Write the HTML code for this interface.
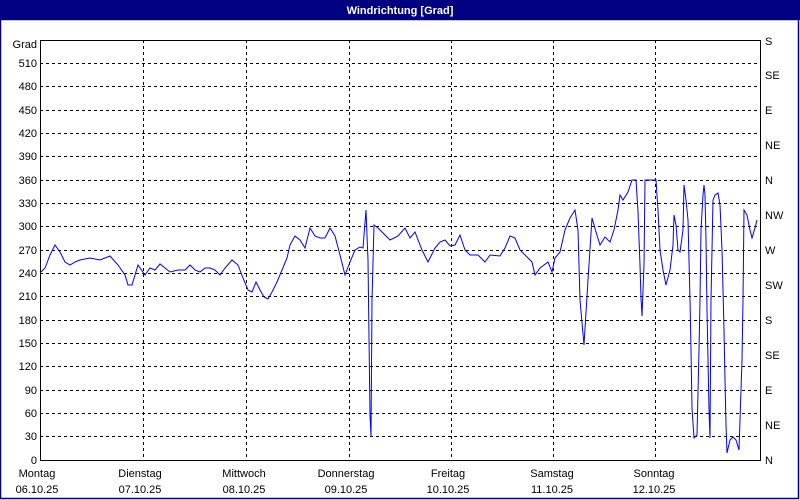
<!DOCTYPE html>
<html><head><meta charset="utf-8"><style>
html,body{margin:0;padding:0;background:#fff;}
body{width:800px;height:500px;overflow:hidden;position:relative;font-family:"Liberation Sans",sans-serif;font-size:11px;}
</style></head><body>
<svg width="800" height="500" xmlns="http://www.w3.org/2000/svg" style="position:absolute;left:0;top:0" font-family="Liberation Sans, sans-serif" font-size="11">
<rect x="0" y="0" width="800" height="500" fill="#fff"/>
<rect x="0" y="0" width="800" height="20" fill="#000080"/>
<rect x="0.5" y="19.5" width="798" height="479" fill="none" stroke="#000080" stroke-width="1.5"/>
<text x="400" y="14" fill="#fff" font-weight="bold" text-anchor="middle">Windrichtung [Grad]</text>
<g stroke="#000" stroke-width="1" stroke-dasharray="3,3" fill="none">
<path d="M40 63.5H760M40 86.5H760M40 110.5H760M40 133.5H760M40 156.5H760M40 180.5H760M40 203.5H760M40 226.5H760M40 250.5H760M40 273.5H760M40 296.5H760M40 320.5H760M40 343.5H760M40 366.5H760M40 390.5H760M40 413.5H760M40 436.5H760"/>
<path d="M143.5 40V460M246.5 40V460M349.5 40V460M451.5 40V460M553.5 40V460M655.5 40V460"/>
</g>
<path d="M40.5 40V460.5H760.5V40M40 40.5H760" stroke="#000" fill="none"/>
<g text-anchor="end" fill="#000">
<text x="37" y="48">Grad</text>
<text x="37" y="67">510</text><text x="37" y="90">480</text><text x="37" y="114">450</text>
<text x="37" y="137">420</text><text x="37" y="160">390</text><text x="37" y="184">360</text>
<text x="37" y="207">330</text><text x="37" y="230">300</text><text x="37" y="254">270</text>
<text x="37" y="277">240</text><text x="37" y="300">210</text><text x="37" y="324">180</text>
<text x="37" y="347">150</text><text x="37" y="370">120</text><text x="37" y="394">90</text>
<text x="37" y="417">60</text><text x="37" y="440">30</text><text x="37" y="464">0</text>
</g>
<g fill="#000">
<text x="765" y="45">S</text><text x="765" y="79">SE</text><text x="765" y="114">E</text>
<text x="765" y="149">NE</text><text x="765" y="184">N</text><text x="765" y="219">NW</text>
<text x="765" y="254">W</text><text x="765" y="289">SW</text><text x="765" y="324">S</text>
<text x="765" y="359">SE</text><text x="765" y="394">E</text><text x="765" y="429">NE</text>
<text x="765" y="464">N</text>
</g>
<g fill="#000" text-anchor="middle">
<text x="37" y="477">Montag</text><text x="37" y="493">06.10.25</text>
<text x="140" y="477">Dienstag</text><text x="140" y="493">07.10.25</text>
<text x="244" y="477">Mittwoch</text><text x="244" y="493">08.10.25</text>
<text x="346" y="477">Donnerstag</text><text x="346" y="493">09.10.25</text>
<text x="448" y="477">Freitag</text><text x="448" y="493">10.10.25</text>
<text x="552" y="477">Samstag</text><text x="552" y="493">11.10.25</text>
<text x="654" y="477">Sonntag</text><text x="654" y="493">12.10.25</text>
</g>
<polyline fill="none" stroke="#0000ff" stroke-width="1" points="41,272 45,268 50,255 55,245 60,252 65,262 70,265 75,262 80,260 90,258 100,260 110,256 118,265 125,275 128,285 132,285 138,265 145,275 150,268 155,270 160,264 165,268 170,272 178,270 185,270 190,265 195,270 200,272 205,268 210,268 215,270 220,275 225,268 232,260 238,265 243,278 248,290 252,292 256,282 260,290 264,297 268,299 272,292 277,282 282,270 287,258 290,245 295,236 300,240 305,248 310,228 315,236 320,238 325,238 330,228 335,236 340,255 345,275 350,262 355,250 360,247 363,248 366,210 368,260 370,415 371,436 372,300 374,225 378,228 385,235 390,240 398,236 405,228 410,238 415,232 422,250 428,262 435,248 440,242 445,240 450,246 455,245 460,235 465,250 470,255 478,255 485,262 490,255 500,256 505,248 510,236 515,238 520,250 525,255 532,262 535,275 540,268 548,262 552,272 555,258 560,252 565,230 570,218 575,210 578,230 580,300 584,345 588,280 592,218 596,232 600,245 605,237 610,242 614,230 618,210 620,195 623,200 628,192 632,180 636,180 638,212 640,265 641,298 642,316 644,265 645,180 656,180 658,210 660,250 663,270 666,285 670,270 673,245 674,215 676,225 678,250 680,252 683,230 684,185 686,200 688,220 690,300 691,350 692,408 694,438 697,435 699,350 700,300 701,230 703,195 704,185 705,195 706,240 707,310 708,360 709,410 710,438 711,300 713,200 715,195 718,193 720,205 722,250 724,330 725,380 726,425 727,453 730,440 733,437 736,440 739,450 740,420 742,360 743,300 744,210 747,215 750,230 752,238 755,228 757,220"/>
</svg>
</body></html>
